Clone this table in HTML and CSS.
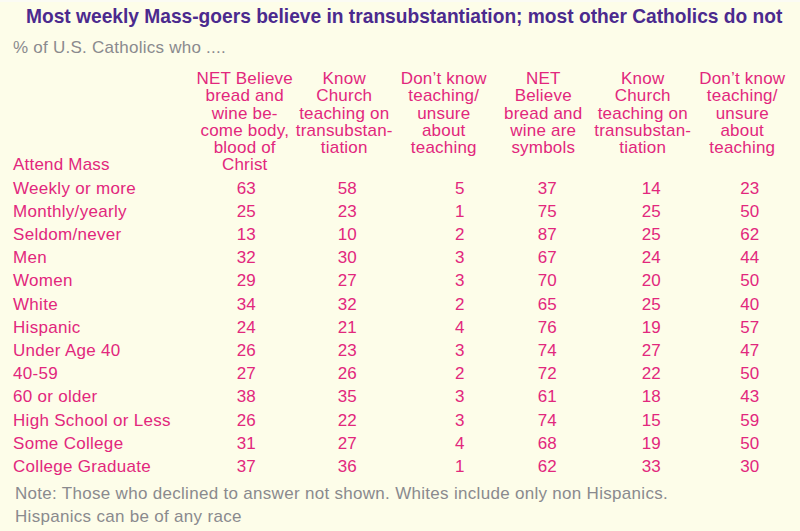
FILE: index.html
```html
<!DOCTYPE html>
<html lang="en">
<head>
<meta charset="utf-8">
<title>Transubstantiation beliefs</title>
<link rel="stylesheet" href="styles.css">
</head>
<body>
<div class="page">
  <h1 class="title">Most weekly Mass-goers believe in transubstantiation; most other Catholics do not</h1>
  <p class="subtitle">% of U.S. Catholics who ....</p>
  <div class="table">
    <div class="cell head-label">Attend Mass</div>
    <div class="cell head">NET Believe<br>bread and<br>wine be-<br>come body,<br>blood of<br>Christ</div>
    <div class="cell head">Know<br>Church<br>teaching on<br>transubstan-<br>tiation</div>
    <div class="cell head">Don’t know<br>teaching/<br>unsure<br>about<br>teaching</div>
    <div class="cell head">NET<br>Believe<br>bread and<br>wine are<br>symbols</div>
    <div class="cell head">Know<br>Church<br>teaching on<br>transubstan-<br>tiation</div>
    <div class="cell head">Don’t know<br>teaching/<br>unsure<br>about<br>teaching</div>
  </div>
  <div class="table rows">
    <div class="label">Weekly or more</div><div class="n c1">63</div><div class="n c2">58</div><div class="n c3">5</div><div class="n c4">37</div><div class="n c5">14</div><div class="n c6">23</div>
    <div class="label">Monthly/yearly</div><div class="n c1">25</div><div class="n c2">23</div><div class="n c3">1</div><div class="n c4">75</div><div class="n c5">25</div><div class="n c6">50</div>
    <div class="label">Seldom/never</div><div class="n c1">13</div><div class="n c2">10</div><div class="n c3">2</div><div class="n c4">87</div><div class="n c5">25</div><div class="n c6">62</div>
    <div class="label">Men</div><div class="n c1">32</div><div class="n c2">30</div><div class="n c3">3</div><div class="n c4">67</div><div class="n c5">24</div><div class="n c6">44</div>
    <div class="label">Women</div><div class="n c1">29</div><div class="n c2">27</div><div class="n c3">3</div><div class="n c4">70</div><div class="n c5">20</div><div class="n c6">50</div>
    <div class="label">White</div><div class="n c1">34</div><div class="n c2">32</div><div class="n c3">2</div><div class="n c4">65</div><div class="n c5">25</div><div class="n c6">40</div>
    <div class="label">Hispanic</div><div class="n c1">24</div><div class="n c2">21</div><div class="n c3">4</div><div class="n c4">76</div><div class="n c5">19</div><div class="n c6">57</div>
    <div class="label">Under Age 40</div><div class="n c1">26</div><div class="n c2">23</div><div class="n c3">3</div><div class="n c4">74</div><div class="n c5">27</div><div class="n c6">47</div>
    <div class="label">40-59</div><div class="n c1">27</div><div class="n c2">26</div><div class="n c3">2</div><div class="n c4">72</div><div class="n c5">22</div><div class="n c6">50</div>
    <div class="label">60 or older</div><div class="n c1">38</div><div class="n c2">35</div><div class="n c3">3</div><div class="n c4">61</div><div class="n c5">18</div><div class="n c6">43</div>
    <div class="label">High School or Less</div><div class="n c1">26</div><div class="n c2">22</div><div class="n c3">3</div><div class="n c4">74</div><div class="n c5">15</div><div class="n c6">59</div>
    <div class="label">Some College</div><div class="n c1">31</div><div class="n c2">27</div><div class="n c3">4</div><div class="n c4">68</div><div class="n c5">19</div><div class="n c6">50</div>
    <div class="label">College Graduate</div><div class="n c1">37</div><div class="n c2">36</div><div class="n c3">1</div><div class="n c4">62</div><div class="n c5">33</div><div class="n c6">30</div>
  </div>
  <p class="note">Note: Those who declined to answer not shown. Whites include only non Hispanics.<br>Hispanics can be of any race</p>
</div>
</body>
</html>
```
FILE: styles.css
```css
html, body {
  margin: 0;
  padding: 0;
  background: #fdfde9;
}
.page {
  width: 800px;
  height: 531px;
  box-sizing: border-box;
  padding: 2px 0 0 13px;
  border-top: 2px solid #fbfbf4;
  font-family: "Liberation Sans", Arial, sans-serif;
  font-size: 17px;
  color: #e2277d;
  overflow: hidden;
}
.title {
  margin: 0 0 0 13px;
  font-family: "Liberation Sans", Arial, sans-serif;
  font-weight: bold;
  font-size: 21px;
  line-height: 24px;
  color: #4b2a8e;
  white-space: nowrap;
  transform: scaleX(0.913);
  transform-origin: left center;
}
.subtitle {
  margin: 10px 0 0 0;
  font-size: 17px;
  line-height: 20px;
  color: #8a8a8e;
  letter-spacing: 0.25px;
}
.table {
  display: grid;
  grid-template-columns: 182px repeat(6, 99.5px);
}
.table:first-of-type {
  margin-top: 12px;
}
.head {
  text-align: center;
  line-height: 17.3px;
  letter-spacing: 0.2px;
}
.head-label {
  align-self: end;
  line-height: 17.3px;
  letter-spacing: 0.2px;
}
.rows {
  margin-top: 3px;
  line-height: 23.17px;
}
.label {
  letter-spacing: 0.3px;
}
.n {
  text-align: center;
}
.c1 { padding-left: 3px; }
.c2 { padding-left: 6px; }
.c3 { padding-left: 32px; }
.c4 { padding-left: 8px; }
.c5 { padding-left: 17px; }
.c6 { padding-left: 15px; }
.note {
  margin: 5px 0 0 2px;
  line-height: 22.5px;
  color: #8a8a8e;
  letter-spacing: 0.3px;
}
```
